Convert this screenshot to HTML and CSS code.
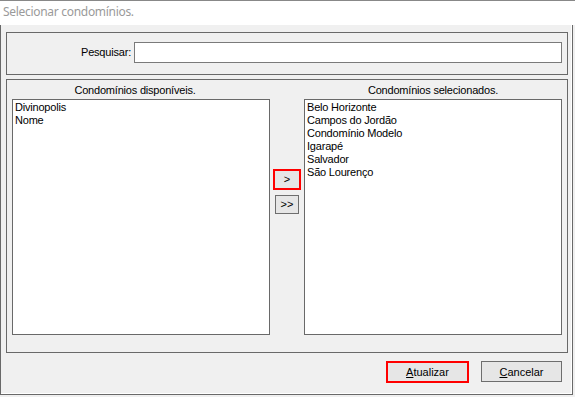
FILE: index.html
```html
<!DOCTYPE html>
<html lang="pt-BR">
<head>
<meta charset="utf-8">
<title>Selecionar condomínios.</title>
<link rel="stylesheet" href="styles.css">
</head>
<body>
<div class="title">Selecionar condomínios.</div>
<div class="dialog">
  <div class="group search">
    <label class="search-label" for="q">Pesquisar:</label>
    <input class="search-input" id="q" type="text">
  </div>
  <div class="group lists">
    <div class="col-title col-left">Condomínios disponíveis.</div>
    <div class="col-title col-right">Condomínios selecionados.</div>
    <div class="listbox">
      <div>Divinopolis</div>
      <div>Nome</div>
    </div>
    <div class="mid">
      <button class="btn small hl">&gt;</button>
      <button class="btn small">&gt;&gt;</button>
    </div>
    <div class="listbox">
      <div>Belo Horizonte</div>
      <div>Campos do Jordão</div>
      <div>Condomínio Modelo</div>
      <div>Igarapé</div>
      <div>Salvador</div>
      <div>São Lourenço</div>
    </div>
  </div>
  <div class="actions">
    <button class="btn action hl"><u>A</u>tualizar</button>
    <button class="btn action"><u>C</u>ancelar</button>
  </div>
</div>
</body>
</html>
```

FILE: styles.css
```css
* { box-sizing: border-box; }
html, body { margin: 0; padding: 0; background: #f0f0f0; }
body {
  width: 575px;
  height: 397px;
  overflow: hidden;
  font-family: "Liberation Sans", Arial, sans-serif;
  font-size: 11px;
  letter-spacing: -0.2px;
  color: #000;
}
.title {
  height: 25px;
  background: #fff;
  border-top: 1px solid #888;
  padding-left: 3px;
  font-family: "Noto Sans", "Open Sans", sans-serif;
  font-size: 12px;
  letter-spacing: -0.3px;
  line-height: 22px;
  color: #9a9a9a;
}
.dialog {
  width: 573px;
  height: 370px;
  border: 1px solid #696969;
  border-top: 0;
  box-shadow: inset -1px -1px 0 #fff;
  padding: 7px 4px 0 5px;
}
.group { border: 1px solid #696969; }
.search {
  height: 43px;
  display: flex;
  align-items: flex-start;
  padding: 9px 5px 0 0;
}
.search-label {
  width: 124px;
  margin-right: 3px;
  text-align: right;
  line-height: 21px;
}
.search-input {
  flex: 1;
  height: 21px;
  margin: 0;
  padding: 0 2px;
  border: 1px solid #7a7a7a;
  background: #fff;
  font: inherit;
  outline: none;
}
.lists {
  margin-top: 4px;
  height: 274px;
  display: grid;
  grid-template-columns: 258px 34px 258px;
  grid-template-rows: 19px 236px;
  padding: 0 5px 17px 5px;
}
.col-title {
  text-align: center;
  padding-top: 1px;
  line-height: 18px;
}
.col-left { padding-right: 12px; }
.col-right { grid-column: 3; }
.listbox {
  background: #fff;
  border: 1px solid #696969;
  padding: 1px 2px;
  line-height: 13px;
}
.mid {
  display: flex;
  flex-direction: column;
  align-items: center;
  padding-top: 70px;
  gap: 5px;
}
.btn {
  font: inherit;
  color: #000;
  background: #e6e6e6;
  border: 1px solid #6e6e6e;
  margin: 0;
  padding: 0;
}
.small { width: 24px; height: 19px; line-height: 17px; }
.small.hl { width: 28px; height: 21px; border: 2px solid #f00; }
.actions {
  display: flex;
  justify-content: flex-end;
  align-items: flex-start;
  gap: 12px;
  padding-right: 6px;
  margin-top: 8px;
}
.action { width: 81px; height: 21px; }
.action.hl { width: 83px; height: 22px; border: 2px solid #f00; }
```
